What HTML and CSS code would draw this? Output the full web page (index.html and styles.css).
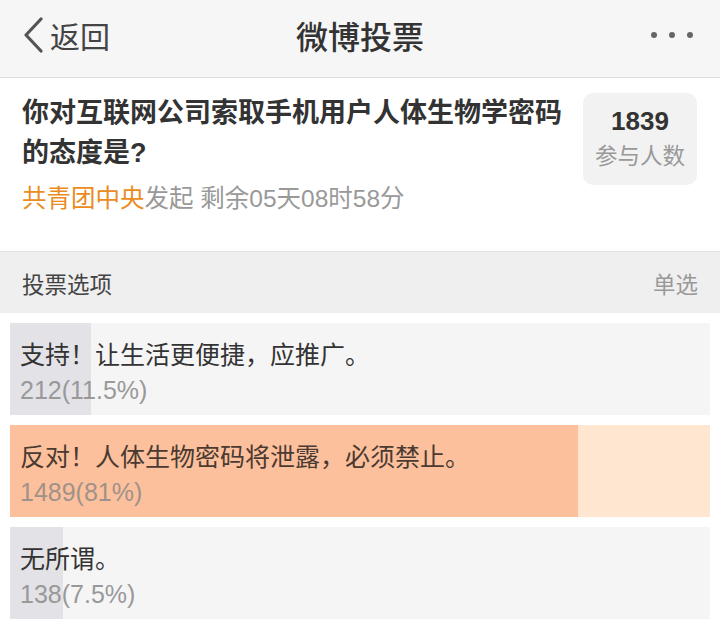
FILE: index.html
```html
<!DOCTYPE html>
<html lang="zh-CN">
<head>
    <meta charset="UTF-8">
    <meta name="viewport" content="width=device-width, initial-scale=1.0">
    <title>微博投票</title>
    <link rel="stylesheet" href="styles.css">
</head>
<body>
    <div class="topbar">
        <div class="back">
            <svg class="chevron" width="22" height="36" viewBox="0 0 22 36">
                <path d="M19 2 L4 18 L19 34" fill="none" stroke="#555" stroke-width="3.2" stroke-linecap="round" stroke-linejoin="round"/>
            </svg>
            <span>返回</span>
        </div>
        <div class="title">微博投票</div>
        <div class="more"><i></i><i></i><i></i></div>
    </div>

    <div class="poll-head">
        <div class="question">
            <h1>你对互联网公司索取手机用户人体生物学密码的态度是?</h1>
            <div class="meta"><span class="author">共青团中央</span>发起 剩余05天08时58分</div>
        </div>
        <div class="count-box">
            <div class="count">1839</div>
            <div class="count-label">参与人数</div>
        </div>
    </div>

    <div class="section-bar">
        <span>投票选项</span>
        <span class="mode">单选</span>
    </div>

    <div class="options">
        <div class="option">
            <div class="fill" style="width: 11.5%"></div>
            <div class="option-text">支持！让生活更便捷，应推广。</div>
            <div class="option-num">212(11.5%)</div>
        </div>
        <div class="option picked">
            <div class="fill" style="width: 81.2%"></div>
            <div class="option-text">反对！人体生物密码将泄露，必须禁止。</div>
            <div class="option-num">1489(81%)</div>
        </div>
        <div class="option">
            <div class="fill" style="width: 7.5%"></div>
            <div class="option-text">无所谓。</div>
            <div class="option-num">138(7.5%)</div>
        </div>
    </div>
</body>
</html>
```

FILE: styles.css
```css
body {
    margin: 0;
    background: #fff;
    font-family: "Liberation Sans", "Noto Sans CJK SC", sans-serif;
    color: #333;
    overflow: hidden;
    text-spacing-trim: space-all;
}
.topbar {
    height: 70px;
    padding-bottom: 7px;
    background: #f6f6f6;
    border-bottom: 1px solid #dedede;
    display: grid;
    grid-template-columns: 1fr auto 1fr;
    align-items: center;
}
.back {
    display: flex;
    align-items: center;
    padding-left: 22px;
    font-size: 30px;
    color: #444;
}
.chevron {
    margin-right: 6px;
}
.title {
    font-size: 32px;
    font-weight: 500;
    color: #333;
}
.more {
    display: flex;
    justify-content: flex-end;
    gap: 12px;
    padding-right: 27px;
}
.more i {
    width: 6px;
    height: 6px;
    border-radius: 50%;
    background: #666;
}
.poll-head {
    display: flex;
    gap: 20px;
    padding: 15px 23px 0 22px;
    height: 158px;
    background: #fff;
}
.question {
    flex: 1;
}
.question h1 {
    margin: 0;
    font-size: 27px;
    line-height: 40px;
    font-weight: bold;
    color: #333;
}
.meta {
    margin-top: 6px;
    font-size: 24.5px;
    line-height: 40px;
    color: #999;
}
.author {
    color: #eb8c1e;
}
.count-box {
    width: 114px;
    height: 92px;
    border-radius: 10px;
    background: #f2f2f2;
    display: flex;
    flex-direction: column;
    justify-content: center;
    align-items: center;
}
.count {
    font-size: 26px;
    font-weight: bold;
    line-height: 36px;
    color: #333;
}
.count-label {
    font-size: 22.5px;
    line-height: 36px;
    color: #999;
}
.section-bar {
    height: 61px;
    border-top: 1px solid #e2e2e2;
    background: #efefef;
    display: flex;
    justify-content: space-between;
    align-items: center;
    padding: 0 22px;
    font-size: 22.5px;
    color: #444;
}
.section-bar .mode {
    color: #999;
}
.options {
    display: flex;
    flex-direction: column;
    gap: 10px;
    padding: 10px;
}
.option {
    position: relative;
    height: 92px;
    box-sizing: border-box;
    padding: 15px 10px 0;
    background: #f5f5f5;
}
.option .fill {
    position: absolute;
    left: 0;
    top: 0;
    bottom: 0;
    background: #e2e2e7;
}
.option.picked {
    background: #fee6d0;
}
.option.picked .fill {
    background: #fdc09c;
}
.option-text, .option-num {
    position: relative;
    font-size: 25px;
    line-height: 35px;
}
.option-text {
    color: #333;
}
.option.picked .option-text {
    color: #4a3a32;
}
.option-num {
    color: #999;
}
.option.picked .option-num {
    color: #a0928a;
}
```
